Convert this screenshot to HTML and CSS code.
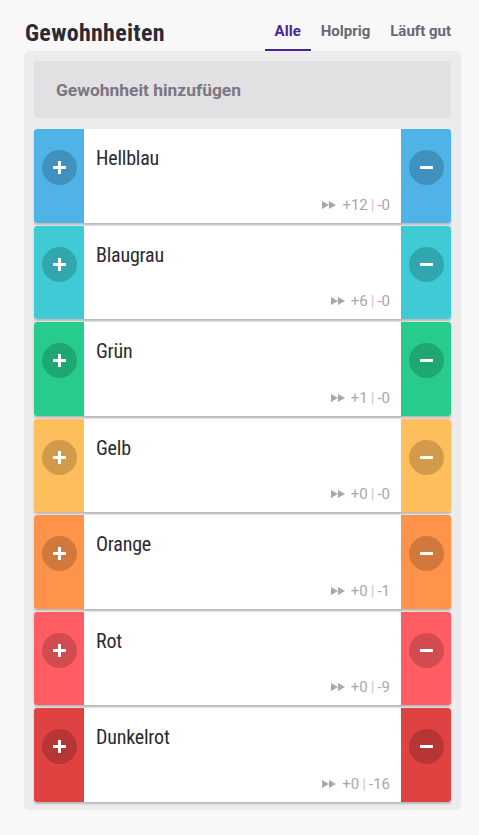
FILE: index.html
```html
<!DOCTYPE html>
<html lang="de">
<head>
    <meta charset="UTF-8">
    <meta name="viewport" content="width=device-width, initial-scale=1.0">
    <title>Gewohnheiten</title>
    <link rel="stylesheet" href="styles.css">
</head>
<body>
    <header class="topbar">
        <h1 class="title">Gewohnheiten</h1>
        <nav class="tabs">
            <a class="tab active">Alle</a>
            <a class="tab">Holprig</a>
            <a class="tab">Läuft gut</a>
        </nav>
    </header>

    <main class="panel">
        <div class="add-box">Gewohnheit hinzufügen</div>

        <div class="habit blue">
            <div class="side"><span class="btn plus"></span></div>
            <div class="body">
                <div class="name">Hellblau</div>
                <div class="stats"><svg class="ff" viewBox="0 0 14 8"><path d="M0 0 L7 4 L0 8 Z M7 0 L14 4 L7 8 Z"/></svg>+12 <span class="sep">|</span> -0</div>
            </div>
            <div class="side"><span class="btn minus"></span></div>
        </div>

        <div class="habit teal">
            <div class="side"><span class="btn plus"></span></div>
            <div class="body">
                <div class="name">Blaugrau</div>
                <div class="stats"><svg class="ff" viewBox="0 0 14 8"><path d="M0 0 L7 4 L0 8 Z M7 0 L14 4 L7 8 Z"/></svg>+6 <span class="sep">|</span> -0</div>
            </div>
            <div class="side"><span class="btn minus"></span></div>
        </div>

        <div class="habit green">
            <div class="side"><span class="btn plus"></span></div>
            <div class="body">
                <div class="name">Grün</div>
                <div class="stats"><svg class="ff" viewBox="0 0 14 8"><path d="M0 0 L7 4 L0 8 Z M7 0 L14 4 L7 8 Z"/></svg>+1 <span class="sep">|</span> -0</div>
            </div>
            <div class="side"><span class="btn minus"></span></div>
        </div>

        <div class="habit yellow">
            <div class="side"><span class="btn plus"></span></div>
            <div class="body">
                <div class="name">Gelb</div>
                <div class="stats"><svg class="ff" viewBox="0 0 14 8"><path d="M0 0 L7 4 L0 8 Z M7 0 L14 4 L7 8 Z"/></svg>+0 <span class="sep">|</span> -0</div>
            </div>
            <div class="side"><span class="btn minus"></span></div>
        </div>

        <div class="habit orange">
            <div class="side"><span class="btn plus"></span></div>
            <div class="body">
                <div class="name">Orange</div>
                <div class="stats"><svg class="ff" viewBox="0 0 14 8"><path d="M0 0 L7 4 L0 8 Z M7 0 L14 4 L7 8 Z"/></svg>+0 <span class="sep">|</span> -1</div>
            </div>
            <div class="side"><span class="btn minus"></span></div>
        </div>

        <div class="habit red">
            <div class="side"><span class="btn plus"></span></div>
            <div class="body">
                <div class="name">Rot</div>
                <div class="stats"><svg class="ff" viewBox="0 0 14 8"><path d="M0 0 L7 4 L0 8 Z M7 0 L14 4 L7 8 Z"/></svg>+0 <span class="sep">|</span> -9</div>
            </div>
            <div class="side"><span class="btn minus"></span></div>
        </div>

        <div class="habit darkred">
            <div class="side"><span class="btn plus"></span></div>
            <div class="body">
                <div class="name">Dunkelrot</div>
                <div class="stats"><svg class="ff" viewBox="0 0 14 8"><path d="M0 0 L7 4 L0 8 Z M7 0 L14 4 L7 8 Z"/></svg>+0 <span class="sep">|</span> -16</div>
            </div>
            <div class="side"><span class="btn minus"></span></div>
        </div>
    </main>
</body>
</html>
```

FILE: styles.css
```css
body {
    font-family: Roboto, "Liberation Sans", sans-serif;
    background-color: #f8f8f9;
    color: #2d2a33;
    margin: 0;
    padding: 0 18px 0 24px;
}

/* Header */
.topbar {
    display: flex;
    justify-content: space-between;
    align-items: flex-end;
    height: 51px;
}
.title {
    font-size: 24px;
    font-weight: 700;
    font-stretch: condensed;
    letter-spacing: 0.3px;
    margin: 0 0 4px 1px;
    color: #2d2a33;
}
.tabs {
    display: flex;
}
.tab {
    font-size: 15px;
    font-weight: 700;
    color: #6b6578;
    padding: 0 10px 9px;
    border-bottom: 2px solid transparent;
}
.tab.active {
    color: #4b2595;
    border-bottom-color: #4b2595;
}

/* Panel */
.panel {
    background-color: #ececee;
    border-radius: 5px;
    padding: 10px 10px 8px;
    display: flex;
    flex-direction: column;
    gap: 3px;
}
.add-box {
    background-color: #e1e0e3;
    border-radius: 3px;
    height: 57px;
    padding-left: 22px;
    display: flex;
    align-items: center;
    font-size: 17.4px;
    font-weight: 700;
    color: #7b7680;
    margin-bottom: 8px;
}

/* Habit cards */
.habit {
    display: flex;
    height: 93.5px;
    border-radius: 3px;
    overflow: hidden;
    background-color: #fff;
    box-shadow: 0 2px 2px rgba(0, 0, 0, 0.22);
}
.side {
    width: 50px;
    flex-shrink: 0;
    display: flex;
    justify-content: center;
    padding-top: 21px;
    box-sizing: border-box;
}
.btn {
    width: 35px;
    height: 35px;
    border-radius: 50%;
    background-color: rgba(0, 0, 0, 0.18);
    position: relative;
}
.btn::before,
.btn::after {
    content: "";
    position: absolute;
    background-color: #fff;
    left: 11px;
    top: 16px;
    width: 13px;
    height: 3px;
}
.btn.plus::after {
    left: 16px;
    top: 11px;
    width: 3px;
    height: 13px;
}
.btn.minus::after {
    display: none;
}
.body {
    flex: 1;
    display: flex;
    flex-direction: column;
    justify-content: space-between;
    padding: 17px 11px 9px 12px;
}
.name {
    font-size: 20px;
    font-stretch: condensed;
    letter-spacing: -0.2px;
    color: #2d2a33;
}
.stats {
    align-self: flex-end;
    font-size: 15px;
    color: #aaa6b0;
    display: flex;
    align-items: center;
}
.stats .sep {
    color: #c9c6ce;
    margin: 0 3px;
}
.ff {
    width: 14px;
    height: 8px;
    fill: #aaa6b0;
    margin-right: 6px;
}

.blue .side { background-color: #4fb3e8; }
.teal .side { background-color: #3ecbd6; }
.green .side { background-color: #27cc8c; }
.yellow .side { background-color: #ffbe5c; }
.orange .side { background-color: #ff934a; }
.red .side { background-color: #ff5c63; }
.darkred .side { background-color: #e04141; }
```
